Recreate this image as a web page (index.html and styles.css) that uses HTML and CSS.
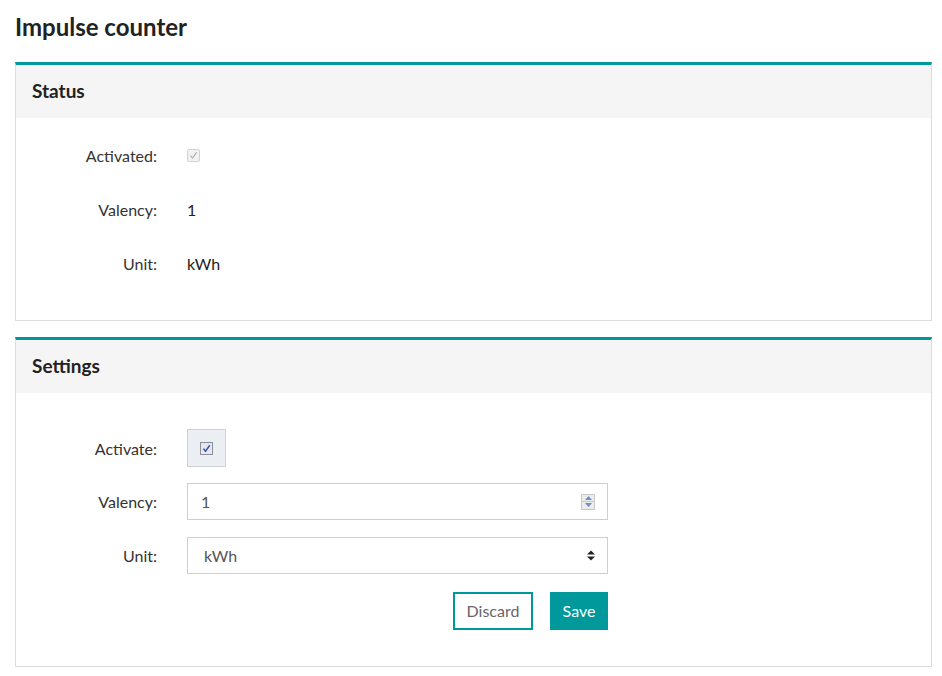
FILE: index.html
```html
<!DOCTYPE html>
<html>
<head>
<meta charset="utf-8">
<link rel="stylesheet" href="styles.css">
</head>
<body>
<div class="page">
  <h1 class="title">Impulse counter</h1>

  <section class="panel">
    <div class="panel-head">Status</div>
    <div class="panel-body status-body">
      <div class="row">
        <div class="label">Activated:</div>
        <div class="value">
          <span class="cb cb-disabled">
            <svg width="9" height="9" viewBox="0 0 9 9"><path d="M1.5 4.8 L3.6 7 L7.6 1.3" fill="none" stroke="#b4b4b4" stroke-width="1.3"/></svg>
          </span>
        </div>
      </div>
      <div class="row">
        <div class="label">Valency:</div>
        <div class="value">1</div>
      </div>
      <div class="row">
        <div class="label">Unit:</div>
        <div class="value">kWh</div>
      </div>
    </div>
  </section>

  <section class="panel">
    <div class="panel-head">Settings</div>
    <div class="panel-body settings-body">
      <div class="row srow srow-cb">
        <div class="label">Activate:</div>
        <div class="value">
          <span class="cb-wrap">
            <span class="cb cb-active">
              <svg width="9" height="9" viewBox="0 0 9 9"><path d="M1.4 4.6 L3.5 7.2 L7.8 1.2" fill="none" stroke="#3a55a8" stroke-width="1.5"/></svg>
            </span>
          </span>
        </div>
      </div>
      <div class="row srow">
        <div class="label">Valency:</div>
        <div class="value">
          <div class="field field-input">
            <span class="field-text">1</span>
            <span class="spinner">
              <span class="spin-btn"><svg width="7" height="4" viewBox="0 0 7 4"><path d="M0 4 L3.5 0 L7 4Z" fill="#6f8fc8"/></svg></span>
              <span class="spin-btn"><svg width="7" height="4" viewBox="0 0 7 4"><path d="M0 0 L3.5 4 L7 0Z" fill="#6f8fc8"/></svg></span>
            </span>
          </div>
        </div>
      </div>
      <div class="row srow srow-last">
        <div class="label">Unit:</div>
        <div class="value">
          <div class="field field-select">
            <span class="field-text">kWh</span>
            <svg class="select-arrow" width="8" height="11" viewBox="0 0 8 11"><path d="M0 4.5 L4 0.5 L8 4.5Z M0 6.5 L4 10.5 L8 6.5Z" fill="#222"/></svg>
          </div>
        </div>
      </div>
      <div class="actions">
        <button class="btn btn-outline">Discard</button>
        <button class="btn btn-primary">Save</button>
      </div>
    </div>
  </section>
</div>
</body>
</html>
```

FILE: styles.css
```css
* { box-sizing: border-box; }
html, body { margin: 0; padding: 0; background: #fff; }
body {
  font-family: Lato, "Open Sans", "Liberation Sans", sans-serif;
  color: #333;
  font-size: 16px;
}
.page {
  padding: 0 10px 0 15px;
}
.title {
  margin: 0;
  padding-top: 12px;
  height: 62px;
  font-size: 24px;
  font-weight: 700;
  color: #222;
  line-height: 30px;
}
.panel {
  border: 1px solid #dcdcdc;
  border-top: 3px solid #00999b;
  margin-bottom: 16px;
}
.panel-head {
  height: 53px;
  background: #f5f5f5;
  padding: 0 16px 2px;
  display: flex;
  align-items: center;
  font-size: 19px;
  font-weight: 700;
  color: #222;
}
.status-body { padding: 19px 0 21px; }
.settings-body { padding: 36px 0 36px; }
.row {
  display: grid;
  grid-template-columns: 141px 421px;
  column-gap: 30px;
  align-items: center;
  height: 36px;
  margin-bottom: 18px;
}
.srow { height: 37px; margin-bottom: 17px; }
.srow-cb { height: 38px; margin-bottom: 16px; }
.srow-last { margin-bottom: 18px; }
.label {
  text-align: right;
  color: #333;
}
.value { color: #222; display: flex; align-items: center; }
.cb {
  width: 13px;
  height: 13px;
  display: inline-flex;
  align-items: center;
  justify-content: center;
}
.cb-disabled {
  border: 1px solid #d2d2d2;
  background: #f2f2f2;
  border-radius: 2px;
}
.cb-wrap {
  width: 39px;
  height: 38px;
  background: #ebeef2;
  border: 1px solid #cfd2d6;
  display: flex;
  align-items: center;
  justify-content: center;
}
.cb-active {
  border: 1px solid #8a8f98;
  background: #e4e8f0;
}
.field {
  width: 421px;
  height: 37px;
  border: 1px solid #cfcfcf;
  display: flex;
  align-items: center;
  padding: 0 12px 0 16px;
  color: #555;
}
.field-input { padding-left: 13px; }
.field-text { flex: 1; }
.spinner {
  width: 14px;
  height: 16px;
  display: flex;
  flex-direction: column;
  border: 1px solid #c9c9c9;
  background: #ececec;
}
.spin-btn {
  flex: 1;
  display: flex;
  align-items: center;
  justify-content: center;
}
.spin-btn + .spin-btn { border-top: 1px solid #c9c9c9; }
.actions {
  display: flex;
  justify-content: flex-start;
  gap: 17px;
  padding-left: 437px;
  height: 38px;
}
.btn {
  font-family: inherit;
  font-size: 16px;
  height: 38px;
  padding: 0 0 1px;
  border-radius: 0;
  cursor: pointer;
}
.btn-outline {
  width: 80px;
  background: #fff;
  border: 2px solid #00999b;
  color: #666;
}
.btn-primary {
  width: 58px;
  background: #00999b;
  border: none;
  color: #fff;
}
```
